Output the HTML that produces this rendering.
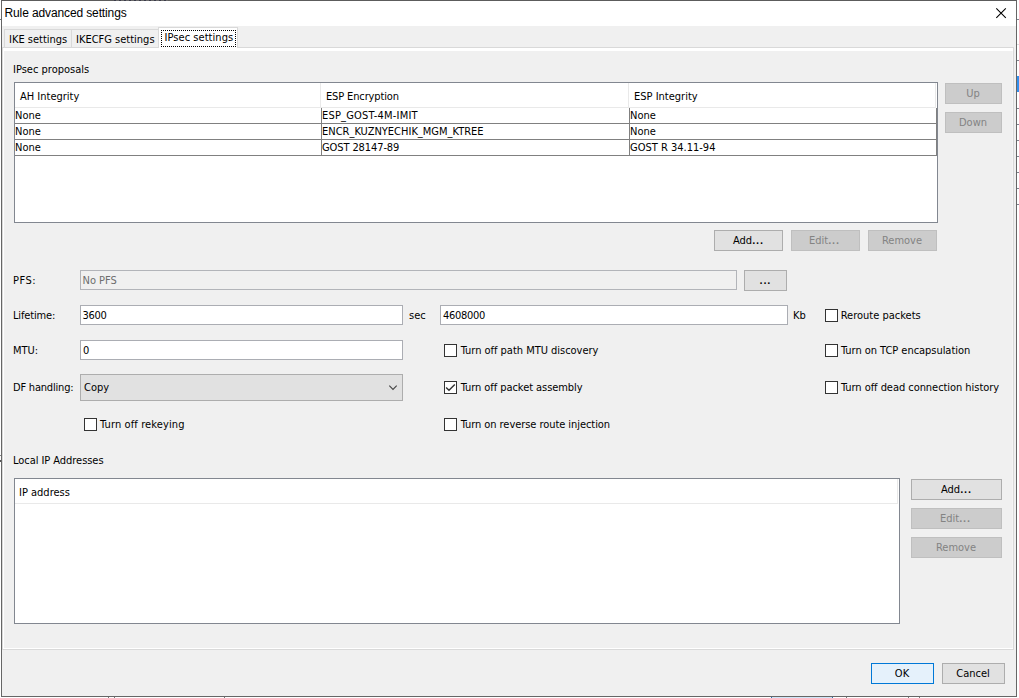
<!DOCTYPE html><html><head><meta charset="utf-8"><title>Rule advanced settings</title><style>
html,body{margin:0;padding:0;}
body{width:1019px;height:698px;background:#fff;position:relative;overflow:hidden;font-family:"DejaVu Sans Condensed","Liberation Sans",sans-serif;font-size:11px;color:#000;}
div,span{position:absolute;box-sizing:border-box;}
.t{line-height:13px;white-space:pre;}
#win{left:1px;top:0;width:1016px;height:697px;border:1px solid #666;border-top-color:#5c5c5c;background:#f0f0f0;}
#title{left:2px;top:1px;width:1014px;height:25px;background:#fff;}
#ttl{left:4.5px;top:6px;letter-spacing:-0.12px;font-family:"Liberation Sans",sans-serif;font-size:12px;line-height:14px;white-space:pre;}
#pane{left:2px;top:47px;width:1012px;height:603px;border:1px solid #d9d9d9;background:#fff;}
#page{left:4px;top:51px;width:1008px;height:597px;background:#f0f0f0;}
.tab{border:1px solid #d9d9d9;border-bottom:none;background:#f0f0f0;}
.tab.act{background:#fff;}
.wh{background:#fff;}
.focus{border:1px dotted #000;}
.list{border:1px solid #828790;background:#fff;}
.hl{background:#e9e9e9;}
.gl{background:#808080;}
.btn{border:1px solid #adadad;background:#e1e1e1;text-align:center;}
.btn span{position:static;line-height:19px;display:block;white-space:pre;padding-right:1px;}
.btn i{font-style:normal;font-weight:bold;font-size:9px;letter-spacing:0.8px;margin-right:-0.8px;}
.btn.dis{border-color:#bfbfbf;background:#cccccc;color:#838383;}
.btn.def{border-color:#0078d7;background:#e5f1fb;}
.edit{border:1px solid #abadb3;background:#fff;}
.edit.dis{border-color:#b2b4b9;background:#f0f0f0;}
.combo{border:1px solid #adadad;background:#e1e1e1;}
.cb{border:1px solid #333;background:#fff;}
.cb svg{position:absolute;left:0;top:0;}
svg{position:absolute;}
</style></head><body>
<div style="left:1017px;top:0;width:2px;height:698px;background:#fff"></div>
<div style="left:1017px;top:76px;width:2px;height:16px;background:#3390ee"></div>
<div style="left:1017px;top:44px;width:2px;height:1px;background:#ddd"></div>
<div style="left:108px;top:697px;width:1px;height:1px;background:#777"></div>
<div style="left:114px;top:697px;width:1px;height:1px;background:#777"></div>
<div style="left:224px;top:697px;width:1px;height:1px;background:#777"></div>
<div style="left:846px;top:697px;width:1px;height:1px;background:#777"></div>
<div style="left:908px;top:697px;width:1px;height:1px;background:#777"></div>
<div style="left:919px;top:697px;width:1px;height:1px;background:#777"></div>
<div style="left:771px;top:697px;width:62px;height:1px;background:#cfe6f8;border-left:1px solid #2a6fb0;border-right:1px solid #2a6fb0"></div>
<div style="left:1017px;top:19px;width:2px;height:1px;background:#80858f"></div>
<div style="left:1017px;top:60px;width:2px;height:1px;background:#80858f"></div>
<div style="left:1017px;top:108px;width:2px;height:1px;background:#80858f"></div>
<div style="left:1017px;top:124px;width:2px;height:1px;background:#80858f"></div>
<div style="left:1017px;top:140px;width:2px;height:1px;background:#80858f"></div>
<div style="left:1017px;top:156px;width:2px;height:1px;background:#80858f"></div>
<div style="left:1017px;top:172px;width:2px;height:1px;background:#80858f"></div>
<div style="left:1017px;top:188px;width:2px;height:1px;background:#80858f"></div>
<div style="left:1017px;top:204px;width:2px;height:1px;background:#80858f"></div>
<div style="left:0;top:19px;width:1px;height:1px;background:#777"></div><div style="left:0;top:455px;width:1px;height:1px;background:#888"></div><div style="left:0;top:460px;width:1px;height:2px;background:#555"></div>
<div id="win"></div>
<div id="title"></div>
<div style="left:114px;top:0;width:54px;height:1px;background:repeating-linear-gradient(90deg,#3a3a4a 0 2px,#6a6a6a 2px 5px)"></div>
<span id="ttl">Rule advanced settings</span>
<svg style="left:995px;top:7px" width="13" height="13" viewBox="0 0 13 13"><path d="M1.3 1.3 L10.8 10.8 M10.8 1.3 L1.3 10.8" stroke="#000" stroke-width="1.1" fill="none"/></svg>
<div id="pane"></div><div id="page"></div><div style="left:1012px;top:51px;width:1px;height:597px;background:#f5f5f5"></div>
<div class="tab" style="left:4px;top:29px;width:68px;height:18px;"></div>
<div class="tab" style="left:71px;top:29px;width:88px;height:18px;"></div>
<div class="tab act" style="left:158px;top:27px;width:80px;height:21px;"></div>
<div class="wh" style="left:159px;top:47px;width:78px;height:2px;"></div>
<div class="focus" style="left:161px;top:30px;width:75px;height:17px;"></div>
<span class="t " style="left:9px;top:33px;">IKE settings</span>
<span class="t " style="left:76px;top:33px;">IKECFG settings</span>
<span class="t " style="left:164.5px;top:31px;letter-spacing:0.05px;">IPsec settings</span>
<span class="t " style="left:13px;top:63px;">IPsec proposals</span>
<div class="list" style="left:14px;top:82px;width:924px;height:141px;"></div>
<div class="hl" style="left:15px;top:107px;width:921px;height:1px;"></div>
<div class="hl" style="left:320px;top:83px;width:1px;height:24px;"></div>
<div class="hl" style="left:628px;top:83px;width:1px;height:24px;"></div>
<div class="hl" style="left:935px;top:83px;width:1px;height:24px;"></div>
<span class="t " style="left:20px;top:90px;">AH Integrity</span>
<span class="t " style="left:326px;top:90px;letter-spacing:-0.14px;">ESP Encryption</span>
<span class="t " style="left:634px;top:90px;">ESP Integrity</span>
<div class="gl" style="left:15px;top:123px;width:922px;height:1px;"></div>
<div class="gl" style="left:15px;top:139px;width:922px;height:1px;"></div>
<div class="gl" style="left:15px;top:155px;width:922px;height:1px;"></div>
<div class="gl" style="left:321px;top:108px;width:1px;height:48px;"></div>
<div class="gl" style="left:629px;top:108px;width:1px;height:48px;"></div>
<div class="gl" style="left:936px;top:108px;width:1px;height:48px;"></div>
<span class="t " style="left:15px;top:109px;">None</span>
<span class="t " style="left:322px;top:109px;letter-spacing:0.2px;">ESP_GOST-4M-IMIT</span>
<span class="t " style="left:630px;top:109px;">None</span>
<span class="t " style="left:15px;top:125px;">None</span>
<span class="t " style="left:322px;top:125px;">ENCR_KUZNYECHIK_MGM_KTREE</span>
<span class="t " style="left:630px;top:125px;">None</span>
<span class="t " style="left:15px;top:141px;">None</span>
<span class="t " style="left:322px;top:141px;letter-spacing:-0.1px;">GOST 28147-89</span>
<span class="t " style="left:630px;top:141px;">GOST R 34.11-94</span>
<div class="btn dis" style="left:945px;top:83px;width:57px;height:21px;"><span style="">Up</span></div>
<div class="btn dis" style="left:945px;top:112px;width:57px;height:21px;"><span style="">Down</span></div>
<div class="btn" style="left:714px;top:230px;width:69px;height:21px;"><span style="">Add<i>...</i></span></div>
<div class="btn dis" style="left:791px;top:230px;width:69px;height:21px;"><span style="padding-right:3px;">Edit<i>...</i></span></div>
<div class="btn dis" style="left:868px;top:230px;width:69px;height:21px;"><span style="">Remove</span></div>
<span class="t " style="left:13px;top:274px;letter-spacing:0.5px;">PFS:</span>
<div class="edit dis" style="left:80px;top:270px;width:657px;height:20px;"></div>
<span class="t " style="left:82.5px;top:274px;color:#6d6d6d;">No PFS</span>
<div class="btn" style="left:744px;top:270px;width:43px;height:21px;"><span style=""><i>...</i></span></div>
<span class="t " style="left:13px;top:309px;letter-spacing:-0.15px;">Lifetime:</span>
<div class="edit" style="left:80px;top:305px;width:323px;height:20px;"></div>
<span class="t " style="left:82.6px;top:309px;letter-spacing:-0.3px;">3600</span>
<span class="t " style="left:409px;top:309px;">sec</span>
<div class="edit" style="left:440px;top:305px;width:348px;height:20px;"></div>
<span class="t " style="left:443px;top:309px;letter-spacing:-0.3px;">4608000</span>
<span class="t " style="left:793px;top:309px;">Kb</span>
<div class="cb" style="left:825px;top:309px;width:13px;height:13px;"></div>
<span class="t " style="left:840.7px;top:309px;letter-spacing:0px;">Reroute packets</span>
<span class="t " style="left:13px;top:344px;">MTU:</span>
<div class="edit" style="left:80px;top:340px;width:323px;height:20px;"></div>
<span class="t " style="left:83px;top:344px;">0</span>
<div class="cb" style="left:444px;top:344px;width:13px;height:13px;"></div>
<span class="t " style="left:460.7px;top:344px;letter-spacing:-0.02px;">Turn off path MTU discovery</span>
<div class="cb" style="left:825px;top:344px;width:13px;height:13px;"></div>
<span class="t " style="left:841px;top:344px;letter-spacing:-0.04px;">Turn on TCP encapsulation</span>
<span class="t " style="left:13px;top:381px;letter-spacing:-0.2px;">DF handling:</span>
<div class="combo" style="left:80px;top:374px;width:323px;height:27px;"></div>
<span class="t " style="left:84px;top:381px;">Copy</span>
<svg style="left:387px;top:383px" width="12" height="9" viewBox="0 0 12 9"><path d="M2.3 2.7 L6 6.4 L9.7 2.7" stroke="#444" stroke-width="1.1" fill="none"/></svg>
<div class="cb" style="left:444px;top:381px;width:13px;height:13px;"><svg width="11" height="11" viewBox="0 0 11 11"><path d="M1.1 5.4 L4 8.3 L9.8 2.4" fill="none" stroke="#333" stroke-width="1.4"/></svg></div>
<span class="t " style="left:460.7px;top:381px;letter-spacing:-0.06px;">Turn off packet assembly</span>
<div class="cb" style="left:825px;top:381px;width:13px;height:13px;"></div>
<span class="t " style="left:841px;top:381px;letter-spacing:-0.05px;">Turn off dead connection history</span>
<div class="cb" style="left:84px;top:418px;width:13px;height:13px;"></div>
<span class="t " style="left:100px;top:418px;letter-spacing:0.12px;">Turn off rekeying</span>
<div class="cb" style="left:444px;top:418px;width:13px;height:13px;"></div>
<span class="t " style="left:460.7px;top:418px;letter-spacing:-0.06px;">Turn on reverse route injection</span>
<span class="t " style="left:13px;top:454px;letter-spacing:-0.05px;">Local IP Addresses</span>
<div class="list" style="left:14px;top:478px;width:886px;height:146px;"></div>
<div class="hl" style="left:15px;top:503px;width:883px;height:1px;"></div>
<div class="hl" style="left:897px;top:479px;width:1px;height:24px;"></div>
<span class="t " style="left:19px;top:486px;">IP address</span>
<div class="btn" style="left:911px;top:479px;width:91px;height:21px;"><span style="">Add<i>...</i></span></div>
<div class="btn dis" style="left:911px;top:508px;width:91px;height:21px;"><span style="padding-right:3px;">Edit<i>...</i></span></div>
<div class="btn dis" style="left:911px;top:537px;width:91px;height:21px;"><span style="">Remove</span></div>
<div class="btn def" style="left:871px;top:663px;width:63px;height:21px;"><span style="">OK</span></div>
<div class="btn" style="left:942px;top:663px;width:63px;height:21px;"><span style="">Cancel</span></div>
</body></html>
